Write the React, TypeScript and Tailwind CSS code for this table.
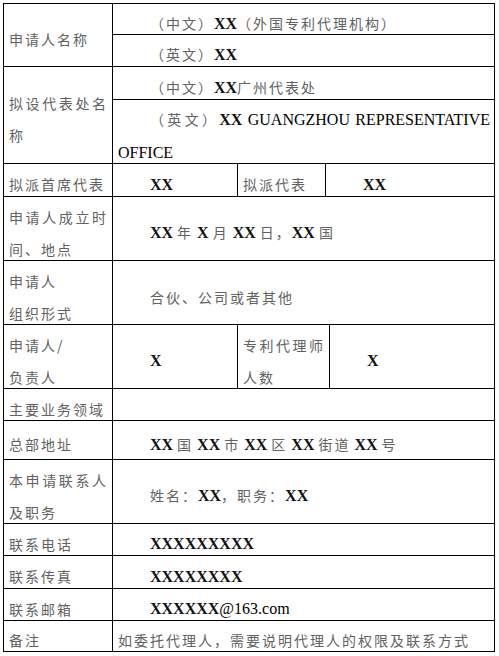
import React from "react";

const cell =
  "border-r border-b border-black flex items-center pt-2 pl-[5px] pr-[4px] min-w-0";
const txt = "w-full leading-[32px] text-justify";

function B({ children }: { children: React.ReactNode }) {
  return (
    <span className="font-['Liberation_Serif',serif] text-[16px] tracking-normal font-bold text-[#111]">
      {children}
    </span>
  );
}

function R({ children }: { children: React.ReactNode }) {
  return (
    <span className="font-['Liberation_Serif',serif] text-[16px] tracking-normal font-normal text-black">
      {children}
    </span>
  );
}

export default function App() {
  return (
    <div className="w-[499px] min-h-[656px] bg-white pt-[3px] pl-[3px] font-['Noto_Sans_CJK_SC',sans-serif] text-[14px] tracking-[2px] text-[#626262]">
      <div className="w-fit border-l border-t border-black grid grid-cols-[109px_125px_88px_4px_165px] grid-rows-[31px_32px_33px_64px_33px_64px_64px_64px_32px_39px_64px_32px_33px_32px_31px]">
        {/* 申请人名称 */}
        <div className={`${cell} row-span-2`}>
          <div className={txt}>申请人名称</div>
        </div>
        <div className={`${cell} col-span-4`}>
          <div className={`${txt} indent-8`}>
            （中文）<B>XX</B>（外国专利代理机构）
          </div>
        </div>
        <div className={`${cell} col-span-4`}>
          <div className={`${txt} indent-8`}>
            （英文）<B>XX</B>
          </div>
        </div>

        {/* 拟设代表处名称 */}
        <div className={`${cell} row-span-2`}>
          <div className={txt}>拟设代表处名称</div>
        </div>
        <div className={`${cell} col-span-4`}>
          <div className={`${txt} indent-8`}>
            （中文）<B>XX</B>广州代表处
          </div>
        </div>
        <div className={`${cell} col-span-4`}>
          <div className={`${txt} indent-8`}>
            （英文）<B>XX</B>
            <R> GUANGZHOU REPRESENTATIVE OFFICE</R>
          </div>
        </div>

        {/* 拟派首席代表 */}
        <div className={cell}>
          <div className={txt}>拟派首席代表</div>
        </div>
        <div className={cell}>
          <div className={`${txt} indent-8`}>
            <B>XX</B>
          </div>
        </div>
        <div className={cell}>
          <div className={txt}>拟派代表</div>
        </div>
        <div className={`${cell} col-span-2`}>
          <div className={`${txt} indent-8`}>
            <B>XX</B>
          </div>
        </div>

        {/* 成立时间 */}
        <div className={cell}>
          <div className={txt}>申请人成立时间、地点</div>
        </div>
        <div className={`${cell} col-span-4`}>
          <div className={`${txt} indent-8`}>
            <B>XX </B>年<B> X </B>月<B> XX </B>日，<B>XX </B>国
          </div>
        </div>

        {/* 组织形式 */}
        <div className={cell}>
          <div className={txt}>
            申请人
            <br />
            组织形式
          </div>
        </div>
        <div className={`${cell} col-span-4`}>
          <div className={`${txt} indent-8`}>合伙、公司或者其他</div>
        </div>

        {/* 负责人 */}
        <div className={cell}>
          <div className={txt}>
            申请人/
            <br />
            负责人
          </div>
        </div>
        <div className={cell}>
          <div className={`${txt} indent-8`}>
            <B>X</B>
          </div>
        </div>
        <div className={`${cell} col-span-2`}>
          <div className={txt}>专利代理师人数</div>
        </div>
        <div className={cell}>
          <div className={`${txt} indent-8`}>
            <B>X</B>
          </div>
        </div>

        {/* 主要业务领域 */}
        <div className={cell}>
          <div className={txt}>主要业务领域</div>
        </div>
        <div className={`${cell} col-span-4`}>
          <div className={txt}></div>
        </div>

        {/* 总部地址 */}
        <div className={cell}>
          <div className={txt}>总部地址</div>
        </div>
        <div className={`${cell} col-span-4`}>
          <div className={`${txt} indent-8`}>
            <B>XX </B>国<B> XX </B>市<B> XX </B>区<B> XX </B>街道<B> XX </B>号
          </div>
        </div>

        {/* 联系人 */}
        <div className={cell}>
          <div className={txt}>本申请联系人及职务</div>
        </div>
        <div className={`${cell} col-span-4`}>
          <div className={`${txt} indent-8`}>
            姓名：<B>XX</B>，职务：<B>XX</B>
          </div>
        </div>

        {/* 联系电话 */}
        <div className={cell}>
          <div className={txt}>联系电话</div>
        </div>
        <div className={`${cell} col-span-4`}>
          <div className={`${txt} indent-8`}>
            <B>XXXXXXXXX</B>
          </div>
        </div>

        {/* 联系传真 */}
        <div className={cell}>
          <div className={txt}>联系传真</div>
        </div>
        <div className={`${cell} col-span-4`}>
          <div className={`${txt} indent-8`}>
            <B>XXXXXXXX</B>
          </div>
        </div>

        {/* 联系邮箱 */}
        <div className={cell}>
          <div className={txt}>联系邮箱</div>
        </div>
        <div className={`${cell} col-span-4`}>
          <div className={`${txt} indent-8`}>
            <B>XXXXXX</B>
            <R>@163.com</R>
          </div>
        </div>

        {/* 备注 */}
        <div className={cell}>
          <div className={txt}>备注</div>
        </div>
        <div className={`${cell} col-span-4`}>
          <div className={txt}>如委托代理人，需要说明代理人的权限及联系方式</div>
        </div>
      </div>
    </div>
  );
}
